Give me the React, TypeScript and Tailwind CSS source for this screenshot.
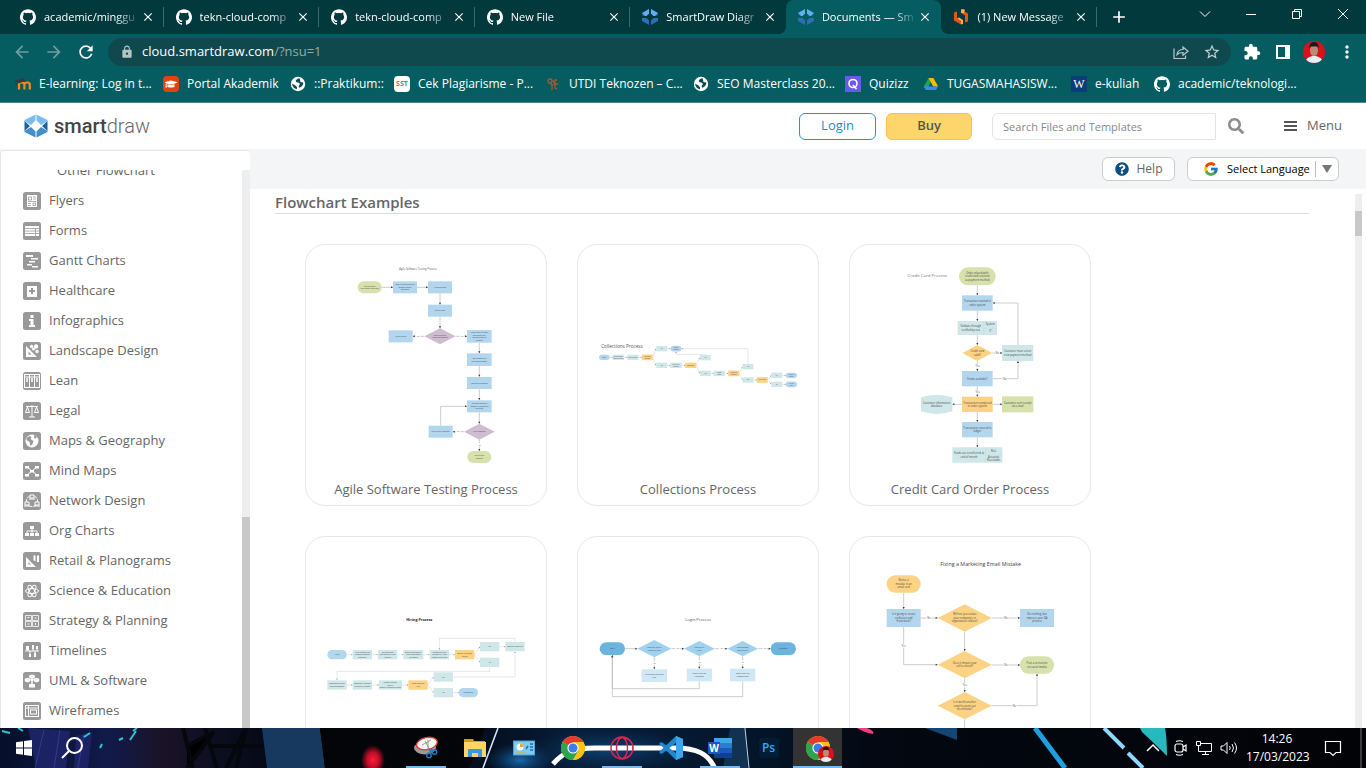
import React from "react";
import { SiGithub } from "react-icons/si";
import { MdExtension, MdLock, MdArrowBack, MdArrowForward, MdRefresh, MdStarBorder, MdClose, MdAdd, MdMoreVert } from "react-icons/md";
import { FaSearch, FaQuestionCircle, FaGraduationCap } from "react-icons/fa";
import { FcGoogle } from "react-icons/fc";

/* ---------- Favicons ---------- */

const Github = () => <SiGithub className="size-4 shrink-0 text-white" />;

const SmartDrawMark = () => (
  <svg viewBox="0 0 16 16" className="size-4 shrink-0">
    <path d="M7 0v4.500L4.500 7H0V4z" fill="#62aef0" />
    <path d="M9 0v4.500L11.500 7H16V4z" fill="#62aef0" />
    <path d="M0 9h4.500L7 11.500V16l-7-4z" fill="#2f6db5" />
    <path d="M16 9h-4.500L9 11.500V16l7-4z" fill="#2f6db5" />
    <path d="M0 4l3 3H0zM16 4l-3 3h3z" fill="#1f4f8c" />
  </svg>
);

const OrangeMark = () => (
  <svg viewBox="0 0 16 16" className="size-4 shrink-0">
    <path d="M1 3.500l3-1v7l4 2.500v3.500L1 11.500z" fill="#e8541a" />
    <path d="M15 12.500l-3 1v-7L8 4V.500l7 4z" fill="#e8541a" />
    <path d="M8 .500l2-.500 2 1-1 3-3 0zM4 9.500l4 2.500 0 3.500 2-.500V11L6 8.500z" fill="#f9b054" />
  </svg>
);

const Globe = () => (
  <svg viewBox="0 0 16 16" className="size-4 shrink-0">
    <circle cx="8" cy="8" r="7.200" fill="#fff" />
    <path d="M9.500 2.200c-2 .2-3.500 1.300-3.700 2.600-.1 1 .8 1.500 2 1.700 1.600.3 2.200.9 1.900 1.800-.3 1-1 1.200-1 2.200l.3 1.300c2-.3 4-2.100 4.300-4.300.1-1-.6-1.200-1.500-1.200-1.200 0-1.800-.6-1.500-1.600zM2 7.500c.2 3 2 5 4.700 5.700.6-.9.600-1.700-.2-2.500C5.600 9.800 5.200 9 4.200 8.700 3.300 8.500 2.600 8 2 7.500z" fill="#0a4c50" />
  </svg>
);

const Moodle = () => (
  <svg viewBox="0 0 16 16" className="size-4 shrink-0">
    <path d="M4 13.500V8.500q0-2 2.700-2t2.700 2v5M9.400 8.500q0-2 2.700-2t2.700 2v5" fill="none" stroke="#f68a1e" strokeWidth="2.200" />
    <path d="M0 5l8-2.500 2 2L4 7zM1 6v4" fill="#3a3a3a" stroke="#3a3a3a" strokeWidth=".7" />
  </svg>
);

const Portal = () => (
  <span className="flex size-4 shrink-0 items-center justify-center rounded-sm bg-[#e2430f]">
    <FaGraduationCap className="size-3 text-white" />
  </span>
);

const Sst = () => (
  <span className="flex size-4 shrink-0 items-center justify-center rounded-sm bg-white text-[7px] font-bold">
    <span className="text-[#e2574c]">S</span>
    <span className="text-[#3c8ccf]">S</span>
    <span className="text-[#3a9b7a]">T</span>
  </span>
);

const Teknozen = () => (
  <svg viewBox="0 0 16 16" className="size-4 shrink-0" fill="none" stroke="#94622c" strokeWidth="1.300">
    <circle cx="5" cy="5" r="2" />
    <path d="M5 7l2 2v5M7 9l3-1V4h2M10 8h3M10 8v4l2 1M8 4l1 3" />
  </svg>
);

const Quizizz = () => (
  <svg viewBox="0 0 16 16" className="size-4 shrink-0">
    <rect width="16" height="16" fill="#6a5ae8" />
    <circle cx="8" cy="7.500" r="4" fill="none" stroke="#fff" strokeWidth="1.600" />
    <path d="M8 9l3.500 4" stroke="#fff" strokeWidth="1.600" />
  </svg>
);

const Drive = () => (
  <svg viewBox="0 0 16 16" className="size-4 shrink-0">
    <path d="M5.600 2h4.800L5.400 10.500 3 14 .8 10.500z" fill="#25a25a" />
    <path d="M5.600 2h4.800l4.800 8.500h-5z" fill="#fbbc04" />
    <path d="M3.400 10.500h11.800L13 14H3L.8 10.500z" fill="#4285f4" />
  </svg>
);

const WIcon = () => (
  <span className="flex size-4 shrink-0 items-center justify-center bg-[#0b3d78] font-['Liberation_Serif',serif] text-xs text-white">W</span>
);

const tabs = [
  { title: "academic/minggu", Icon: Github },
  { title: "tekn-cloud-comp", Icon: Github },
  { title: "tekn-cloud-comp", Icon: Github },
  { title: "New File", Icon: Github },
  { title: "SmartDraw Diagr", Icon: SmartDrawMark },
  { title: "Documents — Sm", Icon: SmartDrawMark, active: true },
  { title: "(1) New Message", Icon: OrangeMark },
];

const bookmarks = [
  { title: "E-learning: Log in t...", Icon: Moodle, width: "w-[148px]" },
  { title: "Portal Akademik", Icon: Portal, width: "w-[127px]" },
  { title: "::Praktikum::", Icon: Globe, width: "w-[104px]" },
  { title: "Cek Plagiarisme - P...", Icon: Sst, width: "w-[151px]" },
  { title: "UTDI Teknozen – C...", Icon: Teknozen, width: "w-[148px]" },
  { title: "SEO Masterclass 20...", Icon: Globe, width: "w-[152px]" },
  { title: "Quizizz", Icon: Quizizz, width: "w-[78px]" },
  { title: "TUGASMAHASISW...", Icon: Drive, width: "w-[148px]" },
  { title: "e-kuliah", Icon: WIcon, width: "w-[83px]" },
  { title: "academic/teknologi...", Icon: Github, width: "w-[148px]" },
];

function TabStrip() {
  return (
    <div className="flex h-[34px] shrink-0 bg-[#02393d] pl-2 text-[11px] text-white">
      <div className="flex w-[1089px]">
        {tabs.map(({ title, Icon, active }, i) => (
          <div
            key={i}
            className={
              active
                ? "relative flex min-w-0 flex-1 items-center rounded-t-lg bg-[#055d61] pl-3 before:absolute before:bottom-0 before:-left-2 before:size-2 before:bg-[radial-gradient(circle_at_0_0,transparent_8px,#055d61_8px)] after:absolute after:bottom-0 after:-right-2 after:size-2 after:bg-[radial-gradient(circle_at_100%_0,transparent_8px,#055d61_8px)]"
                : "flex min-w-0 flex-1 items-center pl-3"
            }
          >
            <Icon />
            <span className="ml-2 min-w-0 flex-1 overflow-hidden whitespace-nowrap [mask-image:linear-gradient(to_right,black_75%,transparent)]">{title}</span>
            <button aria-label="Close tab" className="flex size-4 items-center justify-center">
              <MdClose className="size-3.5" />
            </button>
            <span className={active || i === 4 ? "ml-[7px] h-5 w-px" : "ml-[7px] h-5 w-px bg-[#3b6a6d]"} />
          </div>
        ))}
      </div>
      <button aria-label="New tab" className="ml-3 flex w-5 items-center justify-center">
        <MdAdd className="size-5" />
      </button>
      <div className="ml-auto flex h-7 items-center">
        <button aria-label="Search tabs" className="flex w-[46px] justify-center">
          <svg viewBox="0 0 12 12" className="size-3" fill="none" stroke="#fff"><path d="M1 3.500l5 5 5-5" /></svg>
        </button>
        <button aria-label="Minimize" className="flex w-[46px] justify-center">
          <svg viewBox="0 0 12 12" className="size-3" stroke="#fff"><path d="M1 6.500h10" /></svg>
        </button>
        <button aria-label="Restore" className="flex w-[46px] justify-center">
          <svg viewBox="0 0 12 12" className="size-3" fill="none" stroke="#fff"><path d="M1.500 3.500h7v7h-7zM3.500 3.500v-2h7v7h-2" /></svg>
        </button>
        <button aria-label="Close" className="flex w-[46px] justify-center">
          <svg viewBox="0 0 12 12" className="size-3" stroke="#fff"><path d="M1 1l10 10M11 1L1 11" /></svg>
        </button>
      </div>
    </div>
  );
}

function Toolbar() {
  return (
    <div className="flex h-9 shrink-0 items-center bg-[#055d61] pl-3">
      <button aria-label="Back" className="mr-3 text-[#6f9da0]"><MdArrowBack className="size-5" /></button>
      <button aria-label="Forward" className="mr-3 text-[#6f9da0]"><MdArrowForward className="size-5" /></button>
      <button aria-label="Reload" className="mr-3 text-white"><MdRefresh className="size-5" /></button>
      <div className="flex h-7 flex-1 items-center rounded-full bg-[#0f494e] pl-3 pr-2.5">
        <MdLock className="mr-2 size-3.5 shrink-0 text-[#b5c4c6]" />
        <div className="flex-1 text-[13px] text-[#8fadaf]"><span className="text-white">cloud.smartdraw.com</span>/?nsu=1</div>
        <button aria-label="Share" className="mr-3.5">
          <svg viewBox="0 0 16 16" className="size-4" fill="none" stroke="#b5c8ca" strokeWidth="1.200">
            <path d="M1 4.500v10h11.500v-3" />
            <path d="M4 10.500c.5-3.500 2.500-5 6-5V3l5 4.200-5 4V8.500c-2.500 0-4.500.300-6 2z" />
          </svg>
        </button>
        <button aria-label="Bookmark"><MdStarBorder className="size-[18px] text-[#c0cfd0]" /></button>
      </div>
      <div className="ml-3 flex items-center gap-3 pr-[9px] text-white">
        <button aria-label="Extensions"><MdExtension className="size-[18px]" /></button>
        <button aria-label="Side panel" className="ml-0.5">
          <svg viewBox="0 0 16 16" className="size-4"><path fillRule="evenodd" d="M1 1h14v14H1zM3 3v10h7V3z" fill="#fff" /></svg>
        </button>
        <button aria-label="Profile"><Avatar className="size-[22px]" /></button>
        <button aria-label="More"><MdMoreVert className="size-5" /></button>
      </div>
    </div>
  );
}

function Avatar({ className }: { className: string }) {
  return (
    <svg viewBox="0 0 22 22" className={`${className} rounded-full`}>
      <rect width="22" height="22" fill="#d8121b" />
      <path d="M2.500 22c0-5 4-7 8.500-7s8.500 2 8.500 7z" fill="#e9eef4" />
      <ellipse cx="11" cy="9.500" rx="4" ry="5.500" fill="#b98d74" />
      <path d="M6.500 7.500c-.5-5 2-6.500 4.500-6.500s5 1.500 4.500 6.500L14.500 5.500h-7z" fill="#1c1a1c" />
    </svg>
  );
}

function Bookmarks() {
  return (
    <nav aria-label="Bookmarks" className="flex h-[33px] shrink-0 overflow-hidden border-b border-[#4a8a8d] bg-[#055d61] pl-[15px] pb-1 text-xs text-white">
      {bookmarks.map(({ title, Icon, width }, i) => (
        <a key={i} href="#bookmark" className={`flex shrink-0 items-center gap-2 whitespace-nowrap ${width}`}>
          <Icon />
          {title}
        </a>
      ))}
    </nav>
  );
}

function SiteHeader() {
  return (
    <header className="flex h-[46px] shrink-0 items-center bg-white pr-6 pl-6 text-[13px] text-[#666]">
      <a href="#home" className="flex items-center gap-1.5 font-['Roboto',sans-serif] text-xl text-[#444]">
        <svg viewBox="0 0 24 24" className="size-6">
          <path d="M11.500.500v6L7 11 .500 7V6z" fill="#7bbdf2" />
          <path d="M12.500.500v6L17 11l6.500-4V6z" fill="#7bbdf2" />
          <path d="M.500 17L7 13l4.500 4.500v6L.500 18z" fill="#4290cb" />
          <path d="M23.500 17L17 13l-4.500 4.500v6l11-5.500z" fill="#4290cb" />
          <path d="M.500 7L6 12l-5.500 5zM23.500 7L18 12l5.500 5z" fill="#1d6297" />
        </svg>
        <span className="leading-6"><b className="font-medium">smart</b><span className="font-light text-[#666]">draw</span></span>
      </a>
      <div className="ml-auto flex items-center">
        <button className="h-[27px] w-[77px] rounded-md border border-[#1a9ad6] text-[#1a8fc9]">Login</button>
        <button className="ml-2.5 h-[27px] w-[86px] rounded-md border border-[#fbc045] bg-[#fcd56b] font-semibold text-[#555]">Buy</button>
        <input aria-label="Search Files and Templates" placeholder="Search Files and Templates" className="ml-5 h-[27px] w-56 rounded-l-md border border-[#e4e4e4] px-2.5 text-[11px] text-[#555] placeholder:text-[#888]" />
        <button aria-label="Search" className="ml-3 text-[#8c8c8c]"><FaSearch className="size-4" /></button>
        <button className="ml-10 flex items-center gap-2.5 text-[#666]">
          <svg viewBox="0 0 13 12" className="h-3 w-[13px]" fill="#555"><path d="M0 1h13v2H0zM0 5h13v2H0zM0 9h13v2H0z" /></svg>
          Menu
        </button>
      </div>
    </header>
  );
}

/* ---------- Sidebar ---------- */

const w = { fill: "#fff" };
const line = { fill: "none", stroke: "#fff", strokeWidth: 1 };

const categories: { name: string; glyph: React.ReactNode }[] = [
  { name: "Flyers", glyph: <><rect x="4" y="3" width="10" height="12" {...w} /><path d="M5.500 5h3v3h-3zM10 5h3M10 7h3M5 9.500h8M5 11.500h3M10 11h2.500v2.500H10zM5 13.500h3" fill="none" stroke="#999" strokeWidth=".8" /></> },
  { name: "Forms", glyph: <><rect x="2" y="4" width="14" height="10" {...w} /><path d="M2 6.500h14M2 9h14M2 11.500h14M12.500 6v8" stroke="#999" strokeWidth=".8" /></> },
  { name: "Gantt Charts", glyph: <path d="M3 3h7v2H3zM8 6h7v1.500H8zM6 9h6v1.500H6zM4 12h5v1.500H4zM9 14h6v1.500H9zM9 5l4 1M12 8l-4 1" {...w} /> },
  { name: "Healthcare", glyph: <><rect x="4" y="4" width="10" height="11" {...w} /><path d="M9 6v6M6 9h6" stroke="#999" strokeWidth="2" /></> },
  { name: "Infographics", glyph: <path d="M7.500 3h3v3h-3zM6 7h4.500v6H12v2H6v-2h1.500V9H6z" {...w} /> },
  { name: "Landscape Design", glyph: <><path d="M3 4l11 11H3zM5.500 9.500v3h3z" fillRule="evenodd" {...w} /><circle cx="8.500" cy="4.500" r="1.700" {...w} /><circle cx="13" cy="4.500" r="2.200" {...w} /><circle cx="14" cy="9.500" r="1.700" {...w} /><circle cx="10.500" cy="7" r="1.500" {...w} /></> },
  { name: "Lean", glyph: <><rect x="1.500" y="2.500" width="15" height="13" {...line} /><path d="M6.500 2.500v13M11.500 2.500v13M1.500 5h15" {...line} /><path d="M3 7h2M8 7h2M13 7h2M3 9h2M8 9h2M13 9h2" {...line} strokeWidth={1.3} /></> },
  { name: "Legal", glyph: <path d="M9 3v12M6 15h6M3 4.500h12M4.500 5l-2 5.500h4zM13.500 5l-2 5.500h4z" {...line} /> },
  { name: "Maps & Geography", glyph: <><circle cx="9" cy="9" r="6.500" {...w} /><path d="M3.500 6l3-2 2 1-1 2 3 2-1 3-2 2-1-4-3-2zM11 3l3 2-2 2-1-2z" fill="#999" /></> },
  { name: "Mind Maps", glyph: <><path d="M4 5l5 4 5-4M4 13l5-4 5 4" {...line} /><path d="M2 4h4v2.500H2zM12 4h4v2.500h-4zM2 12h4v2.500H2zM12 12h4v2.500h-4zM7 8h4v2.500H7z" {...w} /></> },
  { name: "Network Design", glyph: <><circle cx="9" cy="9" r="5.500" {...line} strokeDasharray="3 1" /><path d="M7 3h4v3H7zM2 10h4v3H2zM12 10h4v3h-4z" fill="#999" stroke="#fff" /><path d="M6 7h6M1 14h6M11 14h6" {...line} /></> },
  { name: "Org Charts", glyph: <><path d="M7 4h4v3H7zM2 11h4v3H2zM7 11h4v3H7zM12 11h4v3h-4z" {...w} /><path d="M9 6v6M4 12V9h10v3" {...line} /></> },
  { name: "Retail & Planograms", glyph: <><path d="M3 5l10 10H3zM5.500 10v2.500H8z" fillRule="evenodd" {...w} /><path d="M10.500 4l1-1 1 1v5.500l-2-1.500zM14 4l1-1 1 1v6h-2z" {...w} /></> },
  { name: "Science & Education", glyph: <><ellipse cx="9" cy="9" rx="6.500" ry="2.500" {...line} /><ellipse cx="9" cy="9" rx="6.500" ry="2.500" transform="rotate(60 9 9)" {...line} /><ellipse cx="9" cy="9" rx="6.500" ry="2.500" transform="rotate(120 9 9)" {...line} /></> },
  { name: "Strategy & Planning", glyph: <><path d="M2.500 3.500h6v5h-6zM9.500 3.500h6v5h-6zM2.500 9.500h6v5h-6zM9.500 9.500h6v5h-6z" {...line} strokeWidth={0.8} /><path d="M4.500 5.500h2M11.500 6h2M4.500 12h2M12.500 11v2" {...line} /></> },
  { name: "Timelines", glyph: <><path d="M2 9h14M5 4v5M10 4v5M14 4v5M7 9v5M12 9v5" {...line} /><path d="M3 4h3v4H3zM9 3h2v4H9zM13 4h2v3h-2zM6 12h2v3H6zM11 11h2v4h-2z" {...w} /></> },
  { name: "UML & Software", glyph: <><ellipse cx="9" cy="4.500" rx="3" ry="2" {...w} /><ellipse cx="4.500" cy="8" rx="2.800" ry="2.300" {...w} /><ellipse cx="13.500" cy="8" rx="2.800" ry="2.300" {...w} /><path d="M6 12h6v3.500H6z" {...w} /><path d="M9 5v8M4 8h10" {...line} strokeWidth={1.5} /></> },
  { name: "Wireframes", glyph: <><rect x="2.500" y="3.500" width="13" height="11" {...line} /><path d="M2.500 6h13M5.500 3.500v11" {...line} /><rect x="7.500" y="8" width="6" height="4" {...line} /></> },
];

function Sidebar() {
  return (
    <aside className="mt-px flex w-[250px] shrink-0 flex-col rounded-t border border-r-0 border-b-0 border-[#e6e6e6] bg-white pt-[19px] text-[13px] text-[#666]">
      <div className="flex min-h-0 flex-1">
        <ul className="-mt-3.5 flex-1 [clip-path:inset(14px_0_0_0)]">
          <li className="flex h-[30px] items-center pl-14">
            <a href="#other-flowchart">Other Flowchart</a>
          </li>
          {categories.map(({ name, glyph }) => (
            <li key={name}>
              <a href="#category" className="flex h-[30px] items-center pl-[22px]">
                <svg viewBox="0 0 18 18" className="mr-2 size-[18px]">
                  <rect width="18" height="18" rx="2.500" fill="#999" />
                  {glyph}
                </svg>
                {name}
              </a>
            </li>
          ))}
        </ul>
        <div className="flex w-2 flex-col bg-[#eee] pt-[347px]">
          <div className="flex-1 bg-[#c8c8c8]" />
        </div>
      </div>
    </aside>
  );
}

/* ---------- Flowchart thumbnails ---------- */

type Shape = "box" | "pill" | "diamond" | "drum" | "split";
type Node = [Shape, number, number, number, number, string, ...string[]];
type Edge = number[];

const BLUE = "#b3d6ef";
const GREEN = "#d7e1ab";
const PURPLE = "#d0bcd1";
const TEAL = "#cfe7e8";
const ORANGE = "#fcd385";

interface Chart {
  name: string;
  viewBox: string;
  heading: { text: string; x: number; y: number; size: number; color: string; bold?: boolean };
  font: number;
  nodes: Node[];
  edges: Edge[];
  labels?: [string, number, number][];
  light?: boolean;
}

function NodeShape({ node, font }: { node: Node; font: number }) {
  const [shape, cx, cy, width, height, fill, ...lines] = node;
  const left = cx - width / 2;
  const top = cy - height / 2;
  const textX = shape === "split" ? left + width / 3 : cx;
  return (
    <g>
      {shape === "diamond" && <path d={`M${left} ${cy}L${cx} ${top}L${left + width} ${cy}L${cx} ${top + height}z`} fill={fill} />}
      {shape === "drum" && (
        <path d={`M${left} ${top + 8}Q${cx} ${top - 8} ${left + width} ${top + 8}V${top + height - 8}Q${cx} ${top + height + 8} ${left} ${top + height - 8}z`} fill={fill} />
      )}
      {(shape === "box" || shape === "pill" || shape === "split") && (
        <rect x={left} y={top} width={width} height={height} rx={shape === "pill" ? height / 2 : 0} fill={fill} />
      )}
      {shape === "split" && <path d={`M${left + width * 0.66} ${top}v${height}M${left + width * 0.66} ${cy}H${left + width}`} stroke="#bcd9da" strokeWidth="1.500" />}
      {lines.map((t, i) => (
        <text key={i} x={textX} y={cy + (i - (lines.length - 1) / 2) * (font + 2.5) + font * 0.35} textAnchor="middle" fontSize={font} fill="#444">{t}</text>
      ))}
    </g>
  );
}

function EdgeLine({ pts, light }: { pts: Edge; light?: boolean }) {
  const n = pts.length;
  const [px, py, ex, ey] = [pts[n - 4], pts[n - 3], pts[n - 2], pts[n - 1]];
  const angle = (Math.atan2(ey - py, ex - px) * 180) / Math.PI;
  return (
    <g>
      <polyline points={pts.join(" ")} fill="none" stroke={light ? "#ccc" : "#b4b4b4"} strokeWidth={light ? 1.5 : 2} />
      <path d={light ? "M0 0l-4-2v4z" : "M0 0l-6-3v6z"} transform={`translate(${ex} ${ey}) rotate(${angle})`} fill={light ? "#888" : "#333"} />
    </g>
  );
}

const charts: Chart[] = [
  {
    name: "Agile Software Testing Process",
    viewBox: "78 75 600 600",
    heading: { text: "Agile Software Testing Process", x: 354, y: 91, size: 8, color: "#555" },
    font: 5,
    edges: [
      [245, 142, 279, 142], [351, 142, 384, 142], [420, 160, 420, 194], [420, 230, 420, 265], [373, 289, 338, 289], [467, 289, 501, 289],
      [538, 308, 538, 340], [538, 378, 538, 410], [538, 448, 538, 480], [538, 517, 538, 551], [492, 575, 458, 575], [538, 599, 538, 633], [422, 557, 422, 499, 501, 499],
    ],
    labels: [["No", 354, 290], ["Yes", 486, 290], ["No", 474, 576], ["Yes", 538, 617]],
    nodes: [
      ["pill", 209, 142, 72, 36, GREEN, "Review project", "requirement definitions"],
      ["box", 315, 142, 72, 36, BLUE, "Identify test scenarios for", "software project", "definitions"],
      ["box", 420, 142, 72, 36, BLUE, "Write test cases"],
      ["box", 420, 212, 72, 36, BLUE, "Execute tests"],
      ["diamond", 420, 289, 94, 48, PURPLE, "Does bug found", "block development?"],
      ["box", 302, 289, 72, 36, BLUE, "Add to backlog"],
      ["box", 538, 289, 74, 38, BLUE, "Create issue in tracker", "with status \"bug\"", "and set priority to", "\"blocking\""],
      ["box", 538, 359, 74, 38, BLUE, "Bug is assigned to", "development owner"],
      ["box", 538, 429, 74, 36, BLUE, "Assigned to developer"],
      ["box", 538, 499, 74, 36, BLUE, "Developer marks as", "\"resolved\" or moves to a", "new team"],
      ["diamond", 538, 575, 92, 48, PURPLE, "Is bug resolved?"],
      ["box", 422, 575, 72, 36, BLUE, "Mark bug as \"reopened\""],
      ["pill", 538, 651, 72, 36, GREEN, "Mark bug as", "\"resolved\""],
    ],
  },
  {
    name: "Collections Process",
    viewBox: "84 -165 600 600",
    heading: { text: "Collections Process", x: 156, y: 83, size: 14, color: "#555" },
    font: 4,
    light: true,
    edges: [
      [119, 112, 129, 112], [161, 112, 173, 112], [205, 112, 216, 112], [248, 112, 258, 86], [248, 112, 258, 136], [291, 86, 302, 86], [291, 136, 302, 136],
      [334, 136, 346, 136], [378, 136, 389, 113], [378, 136, 389, 160], [422, 160, 432, 160], [464, 160, 475, 160], [507, 160, 518, 140], [507, 160, 518, 180],
      [550, 180, 561, 180], [593, 180, 604, 166], [593, 180, 604, 193], [636, 166, 648, 166], [636, 193, 648, 193], [534, 132, 534, 86, 334, 86], [406, 105, 406, 103, 318, 103, 318, 95],
    ],
    nodes: [
      ["pill", 103, 112, 32, 16, BLUE, "Collect"],
      ["box", 145, 112, 33, 16, TEAL, "Review account", "history and notes"],
      ["box", 189, 112, 33, 16, TEAL, "Contact debtor"],
      ["box", 232, 112, 33, 17, ORANGE, "Did debtor", "respond?"],
      ["box", 275, 86, 33, 16, TEAL, "Yes"],
      ["pill", 318, 86, 32, 17, BLUE, "Collect", "payment"],
      ["box", 275, 136, 33, 16, TEAL, "No"],
      ["box", 318, 136, 35, 16, TEAL, "Send letter", "to debtor"],
      ["box", 362, 136, 33, 16, ORANGE, "Responded?"],
      ["box", 406, 113, 33, 16, TEAL, "Yes"],
      ["box", 406, 160, 33, 16, TEAL, "No"],
      ["box", 448, 160, 33, 16, TEAL, "Second", "notice"],
      ["box", 491, 160, 33, 17, ORANGE, "Did debtor", "respond?"],
      ["box", 534, 140, 33, 16, TEAL, "Yes"],
      ["box", 534, 180, 33, 16, TEAL, "No"],
      ["box", 577, 180, 33, 17, ORANGE, "Legal action?"],
      ["box", 620, 166, 33, 16, TEAL, "Yes"],
      ["pill", 664, 166, 34, 16, BLUE, "Send to", "attorney"],
      ["box", 620, 193, 33, 16, TEAL, "No"],
      ["pill", 664, 193, 34, 17, BLUE, "Write off", "debt"],
    ],
  },
  {
    name: "Credit Card Order Process",
    viewBox: "75 75 600 600",
    heading: { text: "Credit Card Process", x: 247, y: 111, size: 13, color: "#777" },
    font: 8,
    edges: [
      [397, 136, 397, 166], [397, 212, 397, 243], [397, 285, 397, 315], [442, 339, 472, 339], [519, 315, 519, 189, 443, 189], [443, 416, 519, 416, 519, 363],
      [397, 363, 397, 393], [397, 439, 397, 470], [351, 493, 322, 493], [443, 493, 472, 493], [397, 516, 397, 546], [397, 592, 397, 622],
    ],
    labels: [["No", 457, 341], ["Yes", 398, 381], ["No", 480, 418], ["Yes", 398, 458]],
    nodes: [
      ["pill", 397, 109, 110, 54, GREEN, "Order placed with", "credit card selected", "as payment method"],
      ["box", 397, 189, 92, 46, BLUE, "Transaction started in", "order system"],
      ["split", 397, 264, 118, 42, TEAL, "Validate through", "verified by visa"],
      ["diamond", 397, 339, 90, 48, ORANGE, "Credit card", "valid?"],
      ["box", 518, 339, 94, 48, TEAL, "Customer must select", "new payment method"],
      ["box", 397, 416, 92, 46, BLUE, "Funds available?"],
      ["drum", 275, 493, 94, 58, TEAL, "Customer information", "database"],
      ["box", 397, 493, 92, 46, ORANGE, "Transaction completed", "in order system"],
      ["box", 518, 493, 94, 48, GREEN, "Customer sent receipt", "via e-mail"],
      ["box", 397, 569, 92, 46, BLUE, "Transaction entered in", "ledger"],
      ["split", 397, 645, 150, 46, TEAL, "Funds are transferred at", "end of month"],
    ],
  },
  {
    name: "Hiring Process",
    viewBox: "78 81 600 600",
    heading: { text: "Hiring Process", x: 358, y: 273, size: 11, color: "#222", bold: true },
    font: 5,
    light: true,
    edges: [
      [140, 374, 158, 374], [216, 374, 234, 374], [292, 374, 311, 374], [369, 374, 389, 374], [447, 374, 465, 374], [523, 374, 540, 350], [523, 374, 540, 397],
      [598, 350, 616, 350], [645, 336, 645, 325, 418, 325, 418, 359], [569, 411, 569, 424, 111, 424, 111, 450], [139, 465, 158, 465], [216, 465, 236, 465],
      [306, 465, 325, 465], [383, 465, 401, 441], [383, 465, 401, 488], [459, 488, 477, 488], [459, 441, 645, 441, 645, 365],
    ],
    nodes: [
      ["pill", 111, 374, 58, 28, BLUE, "Hiring"],
      ["box", 187, 374, 58, 28, TEAL, "Hiring Manager Fills", "Personnel Request", "Document"],
      ["box", 263, 374, 58, 28, TEAL, "Job Description", "Reviewed with Hiring", "Manager"],
      ["box", 340, 374, 60, 28, TEAL, "Opening Reviewed by", "Hiring Department", "Job Posted"],
      ["box", 418, 374, 58, 28, TEAL, "Resumes are Sent", "Reviewed by Hiring", "Manager for Review"],
      ["box", 494, 374, 58, 28, ORANGE, "Enough Candidates", "Found?"],
      ["box", 569, 350, 58, 28, TEAL, "No"],
      ["box", 569, 397, 58, 28, TEAL, "Yes"],
      ["box", 645, 350, 58, 28, TEAL, "Continue Posting Job"],
      ["box", 111, 465, 58, 28, TEAL, "Coordinate Multiple", "Interview Sessions"],
      ["box", 187, 465, 58, 28, TEAL, "Coordinate Additional", "Screening if Needed"],
      ["box", 271, 465, 70, 28, TEAL, "Conduct Reviews", "Notify if", "Offered / Reference Checks"],
      ["box", 354, 465, 58, 28, ORANGE, "Is Offer Going to", "Hire?"],
      ["box", 430, 441, 58, 28, TEAL, "No"],
      ["box", 430, 488, 58, 28, TEAL, "Yes"],
      ["pill", 505, 488, 58, 28, BLUE, "On Boarding"],
    ],
  },
  {
    name: "Login Process",
    viewBox: "84 81 600 600",
    heading: { text: "Login Process", x: 384, y: 273, size: 12, color: "#555" },
    font: 5,
    edges: [
      [165, 356, 202, 356], [304, 356, 342, 356], [434, 356, 472, 356], [564, 356, 602, 356], [253, 382, 253, 418], [388, 379, 388, 416], [518, 379, 518, 416],
      [388, 454, 388, 476, 127, 476, 127, 376], [518, 454, 518, 500, 127, 500, 127, 376],
    ],
    labels: [["Yes", 323, 357], ["Yes", 454, 357], ["Yes", 584, 357], ["No", 253, 401], ["No", 388, 398], ["No", 518, 398]],
    nodes: [
      ["pill", 127, 356, 76, 38, "#6ab4de", "Login"],
      ["diamond", 253, 356, 102, 52, "#a0d2f0", "Does user have an", "account to login?"],
      ["diamond", 388, 356, 92, 46, "#a0d2f0", "Does user id", "exist?"],
      ["diamond", 518, 356, 92, 46, "#a0d2f0", "Does password", "match user id?"],
      ["pill", 640, 356, 76, 38, "#6ab4de", "Successful"],
      ["box", 253, 437, 76, 38, "#d0e8f6", "Ask to create and display", "error"],
      ["box", 388, 435, 76, 38, "#d0e8f6", "Display error, ask", "registration"],
      ["box", 518, 435, 76, 38, "#d0e8f6", "Display error, ask", "password reset"],
    ],
  },
  {
    name: "Fixing a Marketing Email Mistake",
    viewBox: "90 81 600 600",
    heading: { text: "Fixing a Marketing Email Mistake", x: 422, y: 108, size: 16, color: "#444" },
    font: 8,
    edges: [
      [191, 188, 191, 237], [242, 264, 293, 264], [455, 264, 540, 264], [374, 305, 374, 363], [191, 291, 191, 404, 293, 404], [455, 405, 540, 405],
      [374, 445, 374, 486], [455, 527, 591, 527, 591, 431], [374, 568, 374, 640],
    ],
    labels: [["No", 267, 266], ["No", 498, 266], ["Yes", 191, 350], ["No", 498, 407], ["Yes", 374, 467], ["No", 524, 529]],
    nodes: [
      ["pill", 191, 162, 102, 52, ORANGE, "Notice a", "mistake in an", "email sent"],
      ["box", 191, 264, 102, 54, BLUE, "Is it going to create", "confusion and", "frustration?"],
      ["diamond", 374, 264, 162, 82, ORANGE, "Will not you violate", "your company's or", "organization culture?"],
      ["box", 591, 264, 102, 54, BLUE, "Do nothing, but", "improve your QA", "process"],
      ["diamond", 374, 404, 162, 82, ORANGE, "Does it impact your", "call to action?"],
      ["pill", 591, 405, 102, 52, GREEN, "Post a correction", "on social media"],
      ["diamond", 374, 527, 162, 82, ORANGE, "Is it worth another", "email to point out", "the mistake?"],
    ],
  },
];

function ChartCard({ chart }: { chart: Chart }) {
  const { name, viewBox, heading, font, nodes, edges, labels, light } = chart;
  return (
    <a href="#template" className="flex h-[262px] w-[242px] flex-col items-center rounded-[20px] border border-[#e8e8e8] bg-white pt-5">
      <svg viewBox={viewBox} className="size-[200px] shrink-0" role="img" aria-label={name}>
        <text x={heading.x} y={heading.y} textAnchor="middle" fontSize={heading.size} fontWeight={heading.bold ? 700 : 400} fill={heading.color}>{heading.text}</text>
        {edges.map((e, i) => <EdgeLine key={i} pts={e} light={light} />)}
        {nodes.map((n, i) => <NodeShape key={i} node={n} font={font} />)}
        {name.startsWith("Credit") && (
          <g fontSize="8" fill="#444" textAnchor="middle">
            <text x="436" y="256">System</text>
            <text x="436" y="275">IT</text>
            <text x="446" y="636">Role</text>
            <text x="446" y="654">Accounts</text>
            <text x="446" y="663">Receivable</text>
          </g>
        )}
        {labels?.map(([t, x, y], i) => (
          <g key={i}>
            <rect x={x - 7} y={y - 7} width="14" height="10" fill="#fff" />
            <text x={x} y={y + 1} textAnchor="middle" fontSize={font} fill="#555">{t}</text>
          </g>
        ))}
      </svg>
      <span className="mt-3 text-[13px] leading-6 text-[#666]">{name}</span>
    </a>
  );
}

function Content() {
  return (
    <main className="flex min-w-0 flex-1 flex-col">
      <div className="flex h-10 shrink-0 items-center justify-end gap-3 bg-[#f4f5f7] pr-[27px]">
        <button className="flex h-6 w-[73px] items-center justify-center gap-2 rounded-md border border-[#ccc] bg-white text-xs text-[#666]">
          <FaQuestionCircle className="size-3.5 text-[#0c4f82]" />
          Help
        </button>
        <div className="flex h-6 w-[152px] items-center rounded-md border border-[#ccc] bg-white pl-[15px] text-black">
          <FcGoogle className="mr-2 size-4 shrink-0" />
          <select aria-label="Select Language" className="min-w-0 flex-1 appearance-none text-[11px]">
            <option>Select Language</option>
          </select>
          <span className="h-4 w-px bg-[#bbb]" />
          <svg viewBox="0 0 10 8" className="mx-1.5 h-2 w-2.5 shrink-0"><path d="M0 0h10L5 8z" fill="#767676" /></svg>
        </div>
      </div>
      <div className="flex min-h-0 flex-1 overflow-hidden bg-white pr-1">
        <section className="min-w-0 flex-1 pr-[46px] pl-[25px]">
          <h2 className="border-b border-[#ddd] pt-0.5 text-[15px] leading-[22px] font-semibold text-[#666]">Flowchart Examples</h2>
          <div className="flex max-w-[846px] flex-wrap gap-[30px] pt-[30px] pl-[30px]">
            {charts.map((c) => <ChartCard key={c.name} chart={c} />)}
          </div>
        </section>
        <div className="mt-[5px] w-[7px] bg-[#eee] pt-[17px]">
          <div className="h-[25px] bg-[#c8c8c8]" />
        </div>
      </div>
    </main>
  );
}

/* ---------- Taskbar ---------- */

const Chrome = () => (
  <svg viewBox="0 0 24 24" className="size-6">
    <circle cx="12" cy="12" r="12" fill="#fbc116" />
    <path d="M12 12L1.600 6A12 12 0 0122.400 6z" fill="#e33b2e" />
    <path d="M1.600 6A12 12 0 0012 24l5.200-9L12 12z" fill="#2da44e" />
    <path d="M22.400 6H12l5.200 9L12 24A12 12 0 0022.400 6z" fill="#fbc116" />
    <circle cx="12" cy="12" r="5.600" fill="#fff" />
    <circle cx="12" cy="12" r="4.500" fill="#3b7ded" />
  </svg>
);

const apps: { name: string; running?: boolean; active?: boolean; icon: React.ReactNode }[] = [
  {
    name: "Snipping Tool", running: true,
    icon: (
      <svg viewBox="0 0 24 24" className="size-6">
        <ellipse cx="11" cy="12" rx="11" ry="6.500" fill="#9a9a9a" />
        <ellipse cx="13" cy="7.500" rx="10.500" ry="6" fill="#f6f6f6" stroke="#dd3b34" strokeWidth="1.300" transform="rotate(-12 13 8)" />
        <path d="M8 9l9-5M11 5l5 9M14 4l0 10" stroke="#888" strokeWidth=".8" />
        <path d="M15 13l2 4M18 13l-2 4" stroke="#1f7cc4" strokeWidth="1.500" />
        <circle cx="15" cy="19.500" r="2.300" fill="none" stroke="#1f7cc4" strokeWidth="1.400" />
        <circle cx="20.500" cy="16" r="2.300" fill="none" stroke="#1f7cc4" strokeWidth="1.400" />
      </svg>
    ),
  },
  {
    name: "File Explorer",
    icon: (
      <svg viewBox="0 0 24 24" className="size-6">
        <path d="M1 3h9l1 2h11v4H1z" fill="#d99a1c" /><path d="M1 6h22v15H1z" fill="#fdd567" />
        <path d="M5 21v-7q0-1 1-1h12q1 0 1 1v7h-4v-4H9v4z" fill="#3a98dd" />
      </svg>
    ),
  },
  {
    name: "Control Panel",
    icon: (
      <svg viewBox="0 0 24 24" className="size-6">
        <rect x="1.500" y="5" width="21" height="14" fill="#7ccbf2" stroke="#4ba3d8" />
        <circle cx="8" cy="11" r="3.500" fill="#fff" /><path d="M8 11V7.500A3.500 3.500 0 0111.500 11z" fill="#f0a821" />
        <path d="M14 13l2-3M18 8h3M18 11h3M18 14h3" stroke="#1d6faa" strokeWidth="1.500" /><path d="M4 17h10" stroke="#f0a821" />
      </svg>
    ),
  },
  { name: "Chrome", icon: <Chrome /> },
  {
    name: "Opera GX", running: true,
    icon: (
      <svg viewBox="0 0 24 24" className="size-6" fill="none" stroke="#e2244f" strokeWidth="1.400">
        <circle cx="12" cy="12" r="11" /><ellipse cx="12" cy="12" rx="5.500" ry="10.500" /><path d="M14 2.500a9 9.500 0 010 19" strokeWidth="1" />
      </svg>
    ),
  },
  {
    name: "Visual Studio Code",
    icon: (
      <svg viewBox="0 0 24 24" className="size-6">
        <path d="M17 0l7 3v18l-7 3L2 9.500 0 8l2-2 2 1 14 11V6L4 17l-2 1-2-2z" fill="#1e87cf" /><path d="M17 0l7 3v18l-7 3z" fill="#3ba7ea" />
      </svg>
    ),
  },
  {
    name: "Word", running: true,
    icon: (
      <svg viewBox="0 0 24 24" className="size-6">
        <path d="M6 2h18v5H6z" fill="#41a5ee" /><path d="M6 7h18v5H6z" fill="#2b7cd3" /><path d="M6 12h18v5H6z" fill="#185abd" /><path d="M6 17h18v5H6z" fill="#103f91" />
        <rect y="6" width="12" height="12" fill="#185abd" /><text x="6" y="15.500" textAnchor="middle" fontSize="10" fontWeight="700" fill="#fff">W</text>
      </svg>
    ),
  },
  { name: "Photoshop", icon: <span className="flex size-5 items-center justify-center rounded bg-[#001e36] text-xs font-semibold text-[#31a8ff]">Ps</span> },
  {
    name: "Chrome profile", active: true, running: true,
    icon: <span className="relative"><Chrome /><Avatar className="absolute -right-1 -bottom-0.5 size-4" /></span>,
  },
];

function Wallpaper() {
  return (
    <svg viewBox="0 0 1366 40" preserveAspectRatio="none" className="absolute inset-0 size-full" aria-hidden="true">
      <defs>
        <linearGradient id="sky">
          <stop offset="0" stopColor="#06102a" /><stop offset=".08" stopColor="#111a4a" /><stop offset=".12" stopColor="#1a1326" />
          <stop offset=".17" stopColor="#080d1e" /><stop offset=".25" stopColor="#020307" /><stop offset=".36" stopColor="#04101f" />
          <stop offset=".42" stopColor="#071d3a" /><stop offset=".54" stopColor="#04172c" /><stop offset=".64" stopColor="#030812" /><stop offset="1" stopColor="#020306" />
        </linearGradient>
        <radialGradient id="red"><stop offset="0" stopColor="#ff1b38" /><stop offset=".5" stopColor="#c00d27" /><stop offset="1" stopColor="#c00d27" stopOpacity="0" /></radialGradient>
        <radialGradient id="azure"><stop offset="0" stopColor="#1769b0" /><stop offset="1" stopColor="#0b3a66" stopOpacity="0" /></radialGradient>
      </defs>
      <rect width="1366" height="40" fill="url(#sky)" />
      <path d="M28 0l42 3-4 37H36zM76 8l16-4-4 36H74z" fill="#1c2263" />
      <path d="M44 2l-9 38M60 2l-6 38M84 6l-6 34" stroke="#323c8a" />
      <path d="M2 3l8 2M18 0l5 3M84 9l6-4M100 20l2-4M119 12l4-2M130 12l6-9M133 3l4-3" stroke="#2fc3cf" strokeWidth="2" />
      <path d="M183 0l10 40M187 18l27-14-27 36M205 0l12 40M226 40L246 0M246 0l-10 40M212 18h52" stroke="#05070d" strokeWidth="4" />
      <path d="M262 0h58l5 40h-58z" fill="#17395f" />
      <path d="M320 0h165l-16 40H325z" fill="#030509" />
      <ellipse cx="373" cy="32" rx="12" ry="15" fill="url(#red)" />
      <path d="M498 0l-15 40" stroke="#d8ecff" strokeWidth="1.500" />
      <ellipse cx="520" cy="32" rx="35" ry="18" fill="url(#azure)" />
      <ellipse cx="610" cy="22" rx="90" ry="22" fill="url(#azure)" opacity=".5" />
      <path d="M553 36c12-14 24-16 42-16h80c22 0 34 6 40 21" fill="none" stroke="#fff" strokeWidth="5" />
      <path d="M730 0h15l3 40h-25z" fill="#123252" /><path d="M745 0l4 40" stroke="#b8d6ee" />
      <path d="M857 0h10q8 3 6 6-8-1-16-6z" fill="#ee3f83" />
      <path d="M925 0h32v12z" fill="#134672" />
      <path d="M1035 0l30 40" stroke="#1e9fe0" strokeWidth="5" />
      <path d="M1104 0l20 20M1128 25l15 15" stroke="#8cd8ff" strokeWidth="4" />
      <path d="M1140 0h25q2 10 2 28-10-10-25-24z" fill="#27b9bd" />
      <path d="M1361 0v40" stroke="#777" />
    </svg>
  );
}

function Taskbar() {
  return (
    <footer className="relative flex h-10 shrink-0 items-stretch overflow-hidden bg-[#03060d] text-white">
      <Wallpaper />
      <div className="relative flex flex-1">
        <button aria-label="Start" className="flex w-12 items-center justify-center">
          <svg viewBox="0 0 16 16" className="size-4" fill="#fff"><path d="M0 2.200L7 1.200V7.500H0zM8 1l8-1v7.500H8zM0 8.500h7v6.300l-7-1zM8 8.500h8V16l-8-1.100z" /></svg>
        </button>
        <button aria-label="Search" className="flex w-12 items-center justify-center">
          <svg viewBox="0 0 24 24" className="size-6" fill="none" stroke="#fff" strokeWidth="2"><circle cx="14.500" cy="9.500" r="7.500" /><path d="M9 15l-7 7" /></svg>
        </button>
        <div className="ml-[305px] flex">
          {apps.map(({ name, icon, running, active }) => (
            <button
              key={name}
              aria-label={name}
              className={`flex w-[49px] flex-col items-center justify-center border-b-2 ${active ? "border-[#76b9ed] bg-[#333]" : "border-transparent"}`}
            >
              <span className="flex flex-1 items-center pt-0.5">{icon}</span>
              {running && !active && <span className="-mb-0.5 h-0.5 w-10 bg-[#76b9ed]" />}
            </button>
          ))}
        </div>
        <div className="mr-6 ml-auto flex items-center">
          <svg viewBox="0 0 14 14" className="mr-3 size-3.5" fill="none" stroke="#fff" strokeWidth="1.500"><path d="M1 10l6-6 6 6" /></svg>
          <svg viewBox="0 0 16 16" className="mr-2 size-4" fill="none" stroke="#fff" strokeWidth="1.200"><rect x="3" y="4" width="8" height="8" rx="2" /><path d="M11 7l3-2v6l-3-2M4 1.500q3.500-1.500 7 0M4 14.500q3.500 1.500 7 0" /></svg>
          <svg viewBox="0 0 16 16" className="mr-2 size-4" fill="none" stroke="#fff"><path d="M5 3.500h10.500v8H4M9.500 11.500v3M6 14.500h7M.500 1.500h4v4h-4zM2.500 5.500v6h2" /></svg>
          <svg viewBox="0 0 18 16" className="mr-2 h-4 w-[18px]" fill="none" stroke="#fff"><path d="M1 6h2.500L7 2.500v11L3.500 10H1zM9.500 6q1.500 2 0 4M12 4q3 4 0 8M14.500 2.500q4 5.500 0 11" /></svg>
          <div className="w-[62px] text-center text-xs leading-[18px]">14:26<br />17/03/2023</div>
          <svg viewBox="0 0 18 18" className="ml-4 size-[18px]" fill="none" stroke="#fff" strokeWidth="1.200"><path d="M1.500 2.500h15v11H12l-3 3-3-3H1.500z" /></svg>
        </div>
      </div>
    </footer>
  );
}

export default function App() {
  return (
    <div className="flex h-screen flex-col overflow-hidden bg-white font-['Open_Sans','Noto_Sans',sans-serif]">
      <TabStrip />
      <Toolbar />
      <Bookmarks />
      <SiteHeader />
      <div className="flex min-h-0 flex-1 overflow-hidden bg-[#f4f5f7]">
        <Sidebar />
        <Content />
      </div>
      <Taskbar />
    </div>
  );
}
